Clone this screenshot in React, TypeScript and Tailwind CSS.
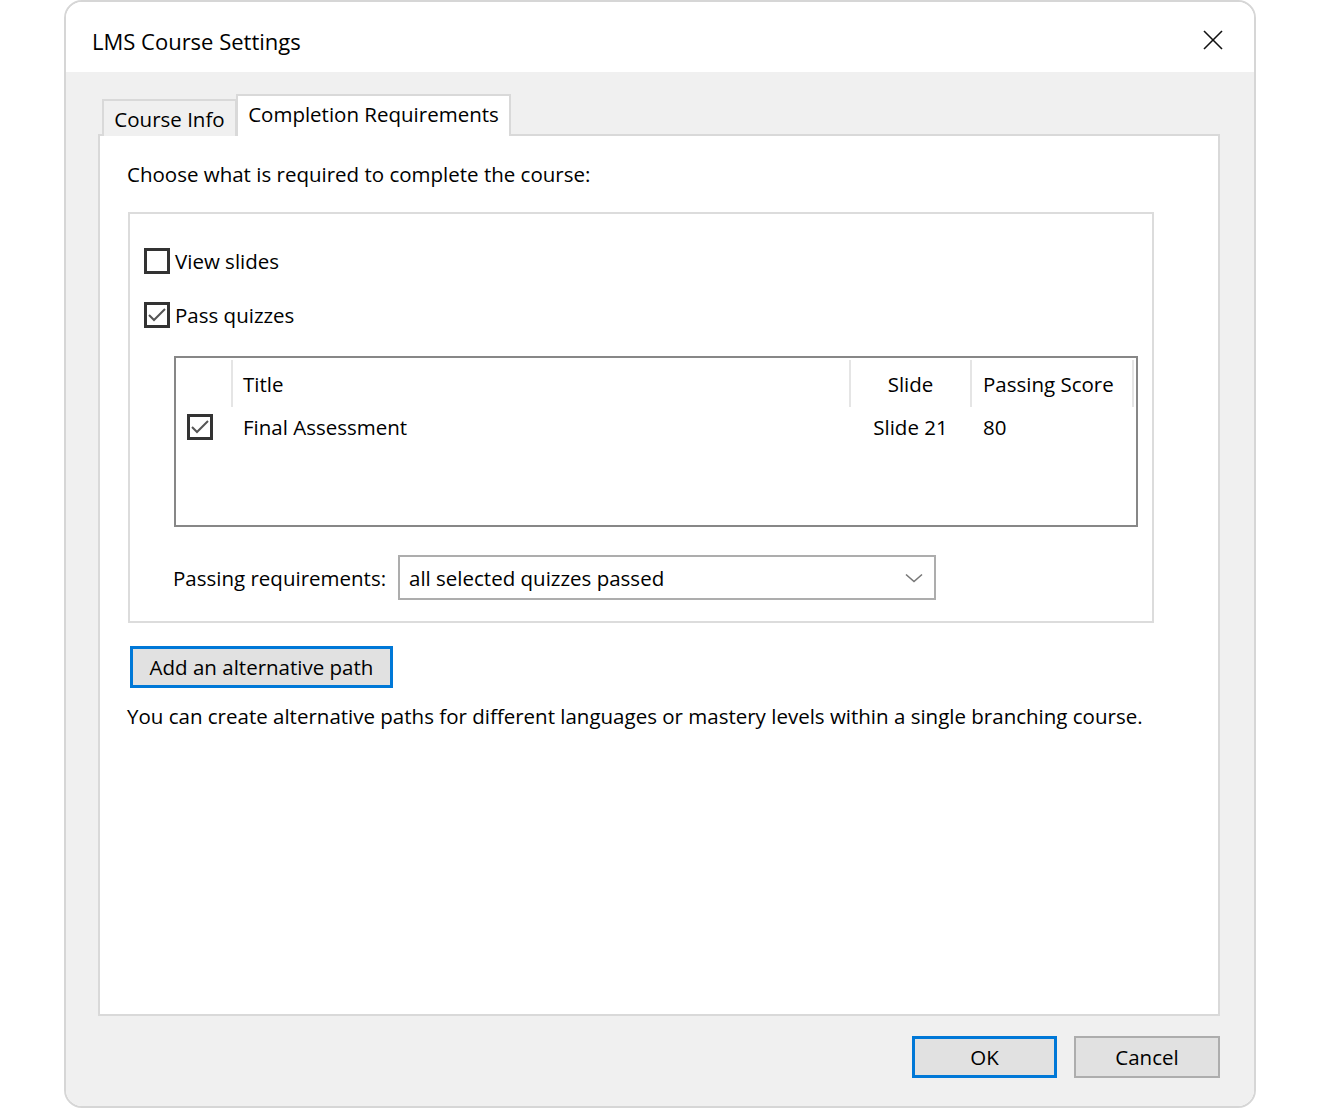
import React from "react";

const font = { fontFamily: "'Open Sans', 'Noto Sans', sans-serif" };

function Check({ checked }: { checked?: boolean }) {
  return (
    <div className="w-[26px] h-[26px] border-[3px] border-[#333333] bg-white shrink-0 flex items-center justify-center">
      {checked && (
        <svg width="20" height="20" viewBox="0 0 20 20">
          <polyline points="2,10 7,15 18,4" fill="none" stroke="#555555" strokeWidth="2" />
        </svg>
      )}
    </div>
  );
}

function Button({ label, focused, className }: { label: string; focused?: boolean; className?: string }) {
  return (
    <button
      className={`h-[42px] bg-[#e1e1e1] text-[20.5px] text-black flex items-center justify-center ${
        focused ? "border-[3px] border-[#0078d7]" : "border-2 border-[#adadad]"
      } ${className ?? ""}`}
    >
      {label}
    </button>
  );
}

export default function App() {
  return (
    <div className="w-[1330px] h-[1108px] bg-white text-black text-[20.5px] leading-[28px]" style={font}>
      <div className="ml-[64px] w-[1192px] h-[1108px] border-2 border-[#d6d6d6] rounded-[18px] overflow-hidden flex flex-col">
        {/* title bar */}
        <div className="h-[70px] bg-white flex items-center justify-between pl-[26px] pr-[30px] shrink-0">
          <span className="pt-[8px] text-[22px]">LMS Course Settings</span>
          <svg width="22" height="22" viewBox="0 0 22 22" className="mt-[6px]">
            <line x1="2" y1="2" x2="20" y2="20" stroke="#111" strokeWidth="1.6" />
            <line x1="20" y1="2" x2="2" y2="20" stroke="#111" strokeWidth="1.6" />
          </svg>
        </div>

        <div className="flex-1 bg-[#f0f0f0] pt-[22px] pl-[32px] pr-[34px] flex flex-col">
          {/* tabs */}
          <div className="flex items-end h-[42px] relative z-10 -mb-[2px]">
            <div className="ml-[4px] w-[135px] h-[37px] border-2 border-b-0 border-[#d9d9d9] bg-[#f0f0f0] flex items-center justify-center">
              Course Info
            </div>
            <div className="w-[275px] h-[42px] border-2 border-b-0 border-[#d9d9d9] bg-white flex items-center justify-center -ml-[1px] pb-[4px]">
              Completion Requirements
            </div>
          </div>

          {/* panel */}
          <div className="h-[882px] border-2 border-[#d9d9d9] bg-white pl-[27px] pt-[24px]">
            <div>Choose what is required to complete the course:</div>

            <div className="mt-[24px] ml-[1px] w-[1026px] h-[411px] border-2 border-[#dcdcdc] pl-[14px] pt-[34px]">
              <div className="flex items-center gap-[5px] h-[26px]">
                <Check />
                <span>View slides</span>
              </div>
              <div className="flex items-center gap-[5px] h-[26px] mt-[28px]">
                <Check checked />
                <span>Pass quizzes</span>
              </div>

              {/* quiz list */}
              <div className="mt-[28px] ml-[30px] w-[964px] h-[171px] border-2 border-[#878787]">
                <div className="grid grid-cols-[55px_618px_121px_162px_1fr] h-[49px] pt-[2px]">
                  <div />
                  <div className="border-l-2 border-[#e5e5e5] pl-[10px] flex items-center">Title</div>
                  <div className="border-l-2 border-[#e5e5e5] flex items-center justify-center">Slide</div>
                  <div className="border-l-2 border-[#e5e5e5] pl-[11px] flex items-center">Passing Score</div>
                  <div className="border-l-2 border-[#e5e5e5]" />
                </div>
                <div className="grid grid-cols-[55px_618px_121px_162px_1fr] h-[26px] mt-[6px] items-center">
                  <div className="pl-[11px]">
                    <Check checked />
                  </div>
                  <div className="pl-[12px]">Final Assessment</div>
                  <div className="text-center pl-[2px]">Slide 21</div>
                  <div className="pl-[13px]">80</div>
                  <div />
                </div>
              </div>

              {/* passing requirements */}
              <div className="mt-[28px] ml-[29px] flex items-center">
                <span className="w-[225px]">Passing requirements:</span>
                <div className="w-[538px] h-[45px] border-2 border-[#adadad] bg-white flex items-center justify-between pl-[9px] pr-[11px]">
                  <span>all selected quizzes passed</span>
                  <svg width="18" height="10" viewBox="0 0 18 10">
                    <polyline points="1,1.5 9,8.5 17,1.5" fill="none" stroke="#777" strokeWidth="1.6" />
                  </svg>
                </div>
              </div>
            </div>

            <Button label="Add an alternative path" focused className="mt-[23px] ml-[3px] w-[263px]" />
            <div className="mt-[14px]">
              You can create alternative paths for different languages or mastery levels within a single branching course.
            </div>
          </div>

          {/* footer */}
          <div className="flex justify-end gap-[17px] mt-[20px]">
            <Button label="OK" focused className="w-[145px]" />
            <Button label="Cancel" className="w-[146px]" />
          </div>
        </div>
      </div>
    </div>
  );
}
